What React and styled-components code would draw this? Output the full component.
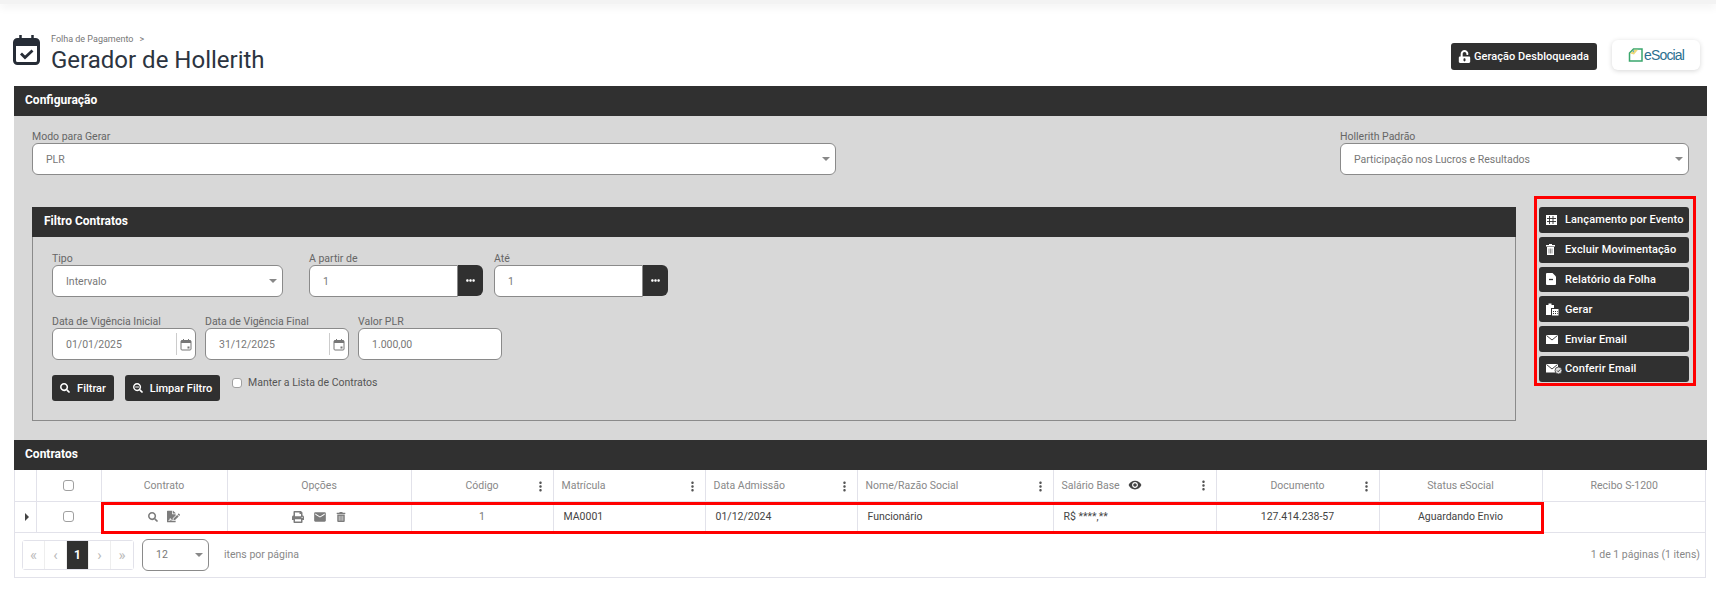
import React from "react";
import styled, { createGlobalStyle } from "styled-components";
import {
  FaEllipsisH,
  FaFileSignature,
  FaPrint,
  FaSearch,
  FaSearchMinus,
  FaTrashAlt,
  FaUnlockAlt,
} from "react-icons/fa";
import { MdEmail, MdMoreVert, MdVisibility } from "react-icons/md";

const GlobalStyle = createGlobalStyle`
  html, body { margin: 0; padding: 0; background: #fff; }
  body { font-family: Roboto, "Liberation Sans", sans-serif; }
  * { box-sizing: border-box; }
`;

const TopBar = styled.div`
  height: 4px;
  background: #f3f3f3;
  box-shadow: 0 2px 10px rgba(0, 0, 0, 0.1);
`;

const Page = styled.div`
  padding: 0 9px 0 14px;
`;

const Header = styled.header`
  display: flex;
  justify-content: space-between;
  align-items: flex-start;
  height: 82px;
  padding-top: 28px;
`;

const TitleGroup = styled.div`
  display: flex;
  align-items: flex-start;
  gap: 11px;
`;

const TitleIcon = styled.svg`
  width: 27px;
  height: 30px;
  margin-top: 3px;
  margin-left: -1px;
`;

const TitleText = styled.div`
  display: flex;
  flex-direction: column;
`;

const Crumb = styled.div`
  font-size: 9px;
  line-height: 14px;
  color: #777;
  span { margin-left: 6px; }
`;

const Title = styled.h1`
  margin: 0;
  font-size: 24px;
  line-height: 28px;
  font-weight: 400;
  color: #2c3440;
`;

const HeaderActions = styled.div`
  display: flex;
  align-items: flex-start;
  gap: 15px;
  padding-right: 7px;
`;

const LockButton = styled.button`
  display: flex;
  align-items: center;
  gap: 3px;
  width: 146px;
  height: 27px;
  margin-top: 11px;
  padding: 0 0 0 7px;
  border: none;
  border-radius: 3px;
  background: #303030;
  color: #fff;
  font: 500 11px Roboto, sans-serif;
  letter-spacing: 0.05px;
  white-space: nowrap;
`;

const LogoCard = styled.div`
  display: flex;
  align-items: center;
  justify-content: center;
  gap: 1px;
  width: 88px;
  height: 30px;
  margin-top: 8px;
  border-radius: 6px;
  background: #fff;
  box-shadow: 0 1px 5px rgba(0, 0, 0, 0.16);
`;

const LogoText = styled.span`
  font: 400 14px "Liberation Sans", sans-serif;
  letter-spacing: -0.85px;
  color: #2b6f8f;
`;

const Band = styled.div`
  display: flex;
  align-items: center;
  height: 30px;
  padding: 0 0 2px ${(p) => p.$inset || 11}px;
  background: #303030;
  color: #fff;
  font-size: 12px;
  font-weight: 700;
`;

const ConfigBody = styled.section`
  padding: 13px 11px 19px 18px;
  background: #d8d8d8;
`;

const TopFields = styled.div`
  display: flex;
  justify-content: space-between;
  padding-right: 7px;
`;

const Field = styled.div`
  display: flex;
  flex-direction: column;
  width: ${(p) => p.$width}px;
  margin-right: ${(p) => p.$after || 0}px;
`;

const Label = styled.label`
  height: 14px;
  padding-top: 1px;
  font-size: 10.5px;
  line-height: 14px;
  color: #666;
  white-space: nowrap;
`;

const InputBox = styled.div`
  position: relative;
  display: flex;
  align-items: center;
  height: 32px;
  padding-left: 13px;
  background: #fff;
  border: 1px solid #8a8a8a;
  border-radius: ${(p) => (p.$joined ? "6px 0 0 6px" : "6px")};
  font-size: 10.5px;
  color: #777;
  flex: ${(p) => (p.$joined ? "1" : "none")};
`;

const Caret = styled.i`
  position: absolute;
  right: 5px;
  top: 13px;
  width: 0;
  height: 0;
  border-left: 4px solid transparent;
  border-right: 4px solid transparent;
  border-top: 4px solid #888;
`;

const Joined = styled.div`
  display: flex;
`;

const Addon = styled.button`
  display: flex;
  align-items: center;
  justify-content: center;
  width: 25px;
  height: 31px;
  padding: 0;
  border: none;
  border-radius: 0 6px 6px 0;
  background: #303030;
  color: #fff;
  font-size: 9px;
`;

const DateToggle = styled.span`
  position: absolute;
  right: 0;
  top: 4px;
  display: flex;
  align-items: center;
  justify-content: center;
  width: 19px;
  height: 22px;
  border-left: 1px solid #ccc;
`;

const ContentRow = styled.div`
  display: flex;
  align-items: flex-start;
  justify-content: space-between;
  margin-top: 21px;
`;

const FilterPanel = styled.div`
  width: 1484px;
  height: 214px;
  margin-top: 11px;
  border: 1px solid #8a8a8a;
  border-top: none;
`;

const FilterHeader = styled(Band)`
  margin: 0 -1px;
`;

const FilterBody = styled.div`
  display: flex;
  flex-direction: column;
  gap: 17px;
  padding: 14px 19px 0;
`;

const FieldRow = styled.div`
  display: flex;
`;

const ButtonRow = styled.div`
  display: flex;
  align-items: flex-start;
  gap: 11px;
  margin-top: -2px;
`;

const DarkButton = styled.button`
  display: flex;
  align-items: center;
  justify-content: ${(p) => (p.$center ? "center" : "flex-start")};
  gap: 7px;
  width: ${(p) => p.$width || 150}px;
  height: 26px;
  padding: ${(p) => (p.$center ? "0" : "0 0 0 7px")};
  border: none;
  border-radius: 3px;
  background: #303030;
  color: #fff;
  font: 500 11px Roboto, sans-serif;
  white-space: nowrap;
`;

const IconSlot = styled.span`
  display: flex;
  align-items: center;
  justify-content: flex-start;
  width: 13px;
  flex: none;
  svg { flex: none; }
`;

const KeepList = styled.label`
  display: flex;
  align-items: center;
  gap: 6px;
  margin: 2px 0 0 1px;
  height: 11px;
  font-size: 10.5px;
  color: #555;
`;

const Check = styled.span`
  display: block;
  width: ${(p) => p.$size || 11}px;
  height: ${(p) => p.$size || 11}px;
  background: #fff;
  border: 1px solid #a0a0a0;
  border-radius: 3px;
`;

const ActionBox = styled.aside`
  display: flex;
  flex-direction: column;
  gap: 4px;
  width: 162px;
  height: 190px;
  padding: 8px 0 0 2px;
  border: 3px solid #f00;
`;

const ActionButton = styled(DarkButton)`
  gap: 6px;
  height: 25.8px;
  letter-spacing: 0.12px;
`;

const TableArea = styled.section`
  position: relative;
  border: 1px solid #e2e2ea;
  border-top: none;
  margin-right: 1px;
`;

const Table = styled.table`
  width: 100%;
  border-collapse: collapse;
  table-layout: fixed;
  font-size: 10.5px;
`;

const Th = styled.th`
  height: 31px;
  padding: 0;
  border: 1px solid #e2e2ea;
  border-top: none;
  font-weight: 400;
  color: #888;
  text-align: center;
  &:first-child { border-left: none; }
  &:last-child { border-right: none; }
`;

const ThInner = styled.div`
  display: flex;
  align-items: center;
  justify-content: ${(p) => (p.$left ? "flex-start" : "center")};
  gap: 8px;
  position: relative;
  padding: 0 ${(p) => (p.$left ? "8px" : "0")};
`;

const Dots = styled(MdMoreVert)`
  position: absolute;
  right: 5px;
  top: 0;
  color: #555;
`;

const Td = styled.td`
  height: 31px;
  padding: 0 ${(p) => (p.$left ? "10px" : "0")};
  border: 1px solid #e2e2ea;
  text-align: ${(p) => (p.$left ? "left" : "center")};
  color: ${(p) => p.$color || "#444"};
  &:first-child { border-left: none; }
  &:last-child { border-right: none; }
`;

const CellIcons = styled.div`
  display: flex;
  align-items: center;
  justify-content: center;
  gap: ${(p) => p.$gap}px;
  color: #7c7c7c;
`;

const CheckCell = styled.div`
  display: flex;
  justify-content: center;
  padding-right: 1px;
`;

const Expander = styled.i`
  display: block;
  width: 0;
  height: 0;
  margin-left: 10px;
  border-top: 4px solid transparent;
  border-bottom: 4px solid transparent;
  border-left: 4px solid #444;
`;

const RowHighlight = styled.div`
  position: absolute;
  left: 86px;
  top: 32px;
  width: 1443px;
  height: 32px;
  border: 3px solid #f00;
  pointer-events: none;
`;

const PagerBar = styled.div`
  display: flex;
  align-items: center;
  height: 44px;
  padding: 0 5px 0 7px;
  font-size: 10.5px;
  color: #888;
`;

const Pager = styled.div`
  display: flex;
  height: 30px;
  border: 1px solid #e2e2ea;
  border-radius: 3px;
`;

const PageButton = styled.span`
  display: flex;
  align-items: center;
  justify-content: center;
  width: 22px;
  background: ${(p) => (p.$active ? "#303030" : "#fff")};
  color: ${(p) => (p.$active ? "#fff" : "#bbb")};
  font-weight: ${(p) => (p.$active ? 700 : 400)};
  font-size: ${(p) => (p.$active ? 12 : 15)}px;
  border-right: ${(p) => (p.$last ? "none" : "1px solid #eee")};
`;

const SizeSelect = styled(InputBox)`
  flex: none;
  width: 67px;
  margin-left: 8px;
`;

const PerPage = styled.span`
  margin-left: 15px;
`;

const PageCount = styled.span`
  margin-left: auto;
`;

const columns = [21, 65, 126, 184, 142, 152, 152, 196, 163, 163, 163, 164];

const CalendarIcon = () => (
  <svg width="12" height="13" viewBox="0 0 12 13" fill="none">
    <rect x="1" y="2.5" width="10" height="9.5" rx="1" stroke="#777" />
    <path d="M1 2.5h10v2.5H1z" fill="#777" />
    <path d="M3.5 1v2M8.500 1v2" stroke="#777" />
    <rect x="7.5" y="8.5" width="2" height="2" fill="#777" />
  </svg>
);

const TableIcon = () => (
  <svg width="11" height="10" viewBox="0 0 11 10">
    <path d="M0 0h11v10H0z" fill="#fff" />
    <path d="M3.500 1v8M1 3.500h9M1 6.500h9M7 1v8" stroke="#303030" strokeWidth="0.900" />
  </svg>
);

const TrashIcon = () => (
  <svg width="9" height="11" viewBox="0 0 9 11">
    <path d="M3 0h3v1h3v1.500H0V1h3z" fill="#fff" />
    <path d="M1 3h7v8H1z" fill="#fff" />
    <path d="M3 4.500v5M4.500 4.500v5M6 4.500v5" stroke="#777" strokeWidth="0.800" />
  </svg>
);

const FileIcon = () => (
  <svg width="10" height="12" viewBox="0 0 10 12">
    <path d="M0 1a1 1 0 011-1h5.500L10 3.500V11a1 1 0 01-1 1H1a1 1 0 01-1-1z" fill="#fff" />
    <path d="M3 6.500h4" stroke="#303030" strokeWidth="1.300" />
  </svg>
);

const ClipboardIcon = () => (
  <svg width="13" height="13" viewBox="0 0 13 13" fill="#fff">
    <path d="M0 2h2.500V0.500h3V2H8v3H5v7H0z" />
    <path d="M6 6h6.500v6.500H6zM7 8v1h1V8zm2 0v1h1V8zm2 0v1h.7V8zM7 10v1h1v-1zm2 0v1h1v-1zm2 0v1h.7v-1z" />
  </svg>
);

const EnvelopeIcon = () => (
  <svg width="12" height="9" viewBox="0 0 12 9">
    <path d="M0 0h12v9H0z" fill="#fff" />
    <path d="M0.500 0.500L6 5l5.500-4.500" fill="none" stroke="#303030" strokeWidth="0.900" />
  </svg>
);

const EnvelopeCheckIcon = () => (
  <svg width="16" height="10" viewBox="0 0 16 10">
    <path d="M0 0h12v8.500H0z" fill="#fff" />
    <path d="M0.500 0.500L6 5l5.500-4.500" fill="none" stroke="#303030" strokeWidth="0.900" />
    <circle cx="12.500" cy="6.500" r="3.500" fill="#ddd" stroke="#303030" strokeWidth="0.800" />
    <path d="M11 6.500l1.200 1.200 2-2.200" fill="none" stroke="#303030" strokeWidth="0.900" />
  </svg>
);

const actions = [
  { label: "Lançamento por Evento", icon: <TableIcon /> },
  { label: "Excluir Movimentação", icon: <TrashIcon /> },
  { label: "Relatório da Folha", icon: <FileIcon /> },
  { label: "Gerar", icon: <ClipboardIcon /> },
  { label: "Enviar Email", icon: <EnvelopeIcon /> },
  { label: "Conferir Email", icon: <EnvelopeCheckIcon /> },
];

const SelectField = ({ label, value, width, after }) => (
  <Field $width={width} $after={after}>
    <Label>{label}</Label>
    <InputBox>
      {value}
      <Caret />
    </InputBox>
  </Field>
);

const LookupField = ({ label, value, after }) => (
  <Field $width={174} $after={after}>
    <Label>{label}</Label>
    <Joined>
      <InputBox $joined>{value}</InputBox>
      <Addon>
        <FaEllipsisH />
      </Addon>
    </Joined>
  </Field>
);

const DateField = ({ label, value, after }) => (
  <Field $width={144} $after={after}>
    <Label>{label}</Label>
    <InputBox>
      {value}
      <DateToggle>
        <CalendarIcon />
      </DateToggle>
    </InputBox>
  </Field>
);

const headers = [
  { label: "" },
  { check: true },
  { label: "Contrato" },
  { label: "Opções" },
  { label: "Código", dots: true },
  { label: "Matrícula", dots: true, left: true },
  { label: "Data Admissão", dots: true, left: true },
  { label: "Nome/Razão Social", dots: true, left: true },
  { label: "Salário Base", dots: true, left: true, eye: true },
  { label: "Documento", dots: true },
  { label: "Status eSocial" },
  { label: "Recibo S-1200" },
];

export default function App() {
  return (
    <>
      <GlobalStyle />
      <TopBar />
      <Page>
        <Header>
          <TitleGroup>
            <TitleIcon viewBox="0 0 27 30" fill="none">
              <rect x="1.500" y="4.500" width="24" height="24" rx="3" stroke="#262c36" strokeWidth="3" />
              <path d="M2 5h23v6H2z" fill="#262c36" />
              <path d="M7.500 0v5M19.500 0v5" stroke="#262c36" strokeWidth="2.500" />
              <path d="M8 18.500l4 4 7.500-7" stroke="#262c36" strokeWidth="2.800" />
            </TitleIcon>
            <TitleText>
              <Crumb>
                Folha de Pagamento<span>&gt;</span>
              </Crumb>
              <Title>Gerador de Hollerith</Title>
            </TitleText>
          </TitleGroup>
          <HeaderActions>
            <LockButton>
              <FaUnlockAlt size={13} />
              Geração Desbloqueada
            </LockButton>
            <LogoCard>
              <svg width="15" height="14" viewBox="0 0 15 14" fill="none">
                <path d="M1.500 13V5L5.500 1H14v12z" fill="#fff" stroke="#3aa76d" strokeWidth="1.500" />
                <path d="M2.200 5.500L5.800 1.800H10L6 6.500z" fill="#ecd97a" />
                <path d="M5.800 1.800L4.500 3.500l1.500 1z" fill="#4aa3d8" />
              </svg>
              <LogoText>eSocial</LogoText>
            </LogoCard>
          </HeaderActions>
        </Header>

        <Band>Configuração</Band>
        <ConfigBody>
          <TopFields>
            <SelectField label="Modo para Gerar" value="PLR" width={804} />
            <SelectField label="Hollerith Padrão" value="Participação nos Lucros e Resultados" width={349} />
          </TopFields>
          <ContentRow>
            <FilterPanel>
              <FilterHeader $inset={12}>Filtro Contratos</FilterHeader>
              <FilterBody>
                <FieldRow>
                  <SelectField label="Tipo" value="Intervalo" width={231} after={26} />
                  <LookupField label="A partir de" value="1" after={11} />
                  <LookupField label="Até" value="1" />
                </FieldRow>
                <FieldRow>
                  <DateField label="Data de Vigência Inicial" value="01/01/2025" after={9} />
                  <DateField label="Data de Vigência Final" value="31/12/2025" after={9} />
                  <Field $width={144}>
                    <Label>Valor PLR</Label>
                    <InputBox>1.000,00</InputBox>
                  </Field>
                </FieldRow>
                <ButtonRow>
                  <DarkButton $center $width={62}>
                    <FaSearch size={10} />
                    Filtrar
                  </DarkButton>
                  <DarkButton $center $width={95}>
                    <FaSearchMinus size={10} />
                    Limpar Filtro
                  </DarkButton>
                  <KeepList>
                    <Check $size={10} />
                    Manter a Lista de Contratos
                  </KeepList>
                </ButtonRow>
              </FilterBody>
            </FilterPanel>
            <ActionBox>
              {actions.map((a) => (
                <ActionButton key={a.label}>
                  <IconSlot>{a.icon}</IconSlot>
                  {a.label}
                </ActionButton>
              ))}
            </ActionBox>
          </ContentRow>
        </ConfigBody>

        <Band>Contratos</Band>
        <TableArea>
          <Table>
            <colgroup>
              {columns.map((w, i) => (
                <col key={i} style={{ width: w }} />
              ))}
            </colgroup>
            <thead>
              <tr>
                {headers.map((h, i) => (
                  <Th key={i}>
                    {h.check ? (
                      <CheckCell>
                        <Check />
                      </CheckCell>
                    ) : (
                      <ThInner $left={h.left}>
                        {h.label}
                        {h.eye && <MdVisibility size={14} color="#444" />}
                        {h.dots && <Dots size={15} />}
                      </ThInner>
                    )}
                  </Th>
                ))}
              </tr>
            </thead>
            <tbody>
              <tr>
                <Td>
                  <Expander />
                </Td>
                <Td>
                  <CheckCell>
                    <Check />
                  </CheckCell>
                </Td>
                <Td>
                  <CellIcons $gap={9}>
                    <FaSearch size={10} />
                    <FaFileSignature size={13} />
                  </CellIcons>
                </Td>
                <Td>
                  <CellIcons $gap={9}>
                    <FaPrint size={12} />
                    <MdEmail size={14} />
                    <FaTrashAlt size={10} />
                  </CellIcons>
                </Td>
                <Td $color="#777">1</Td>
                <Td $left>MA0001</Td>
                <Td $left>01/12/2024</Td>
                <Td $left>Funcionário</Td>
                <Td $left>R$ ****,**</Td>
                <Td>127.414.238-57</Td>
                <Td>Aguardando Envio</Td>
                <Td />
              </tr>
            </tbody>
          </Table>
          <PagerBar>
            <Pager>
              <PageButton>«</PageButton>
              <PageButton>‹</PageButton>
              <PageButton $active>1</PageButton>
              <PageButton>›</PageButton>
              <PageButton $last>»</PageButton>
            </Pager>
            <SizeSelect>
              12
              <Caret />
            </SizeSelect>
            <PerPage>itens por página</PerPage>
            <PageCount>1 de 1 páginas (1 itens)</PageCount>
          </PagerBar>
          <RowHighlight />
        </TableArea>
      </Page>
    </>
  );
}
